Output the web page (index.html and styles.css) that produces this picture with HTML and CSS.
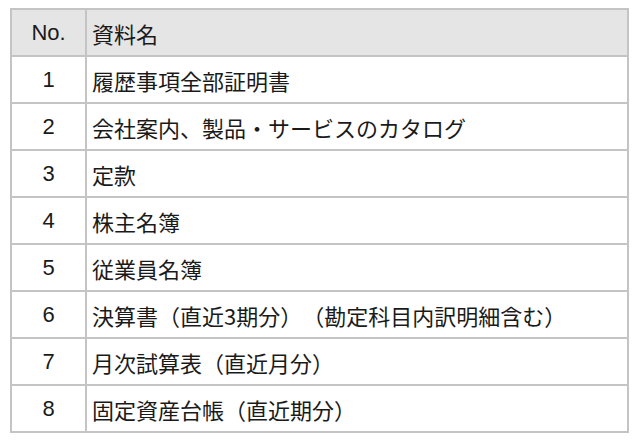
FILE: index.html
```html
<!DOCTYPE html>
<html lang="ja">
<head>
<meta charset="utf-8">
<link rel="stylesheet" href="styles.css">
</head>
<body>
<table class="doc-table">
  <thead>
    <tr><th class="no">No.</th><th class="name">資料名</th></tr>
  </thead>
  <tbody>
    <tr><td class="no">1</td><td class="name">履歴事項全部証明書</td></tr>
    <tr><td class="no">2</td><td class="name">会社案内、製品・サービスのカタログ</td></tr>
    <tr><td class="no">3</td><td class="name">定款</td></tr>
    <tr><td class="no">4</td><td class="name">株主名簿</td></tr>
    <tr><td class="no">5</td><td class="name">従業員名簿</td></tr>
    <tr><td class="no">6</td><td class="name">決算書（直近3期分）（勘定科目内訳明細含む）</td></tr>
    <tr><td class="no">7</td><td class="name">月次試算表（直近月分）</td></tr>
    <tr><td class="no">8</td><td class="name">固定資産台帳（直近期分）</td></tr>
  </tbody>
</table>
</body>
</html>
```
FILE: styles.css
```css
html, body {
  margin: 0;
  padding: 0;
  background: #ffffff;
}
body {
  padding: 8px 0 0 10px;
  font-family: "Noto Sans CJK JP", "Noto Sans", sans-serif;
  color: #1a1a1a;
}
.doc-table {
  border-collapse: collapse;
  width: 619px;
  table-layout: fixed;
}
.doc-table th,
.doc-table td {
  border: 2px solid #c4c4c4;
  height: 45px;
  padding: 0;
  font-size: 22px;
  font-weight: 400;
  line-height: 1;
  vertical-align: middle;
  text-spacing-trim: space-all;
  font-feature-settings: "palt" 0, "halt" 0, "chws" 0;
}
.doc-table thead th {
  background: #e5e5e5;
}
.doc-table .no {
  width: 73px;
  text-align: center;
  font-family: "Liberation Sans", Arial, sans-serif;
}
.doc-table .name {
  text-align: left;
  padding-left: 5px;
}
```
